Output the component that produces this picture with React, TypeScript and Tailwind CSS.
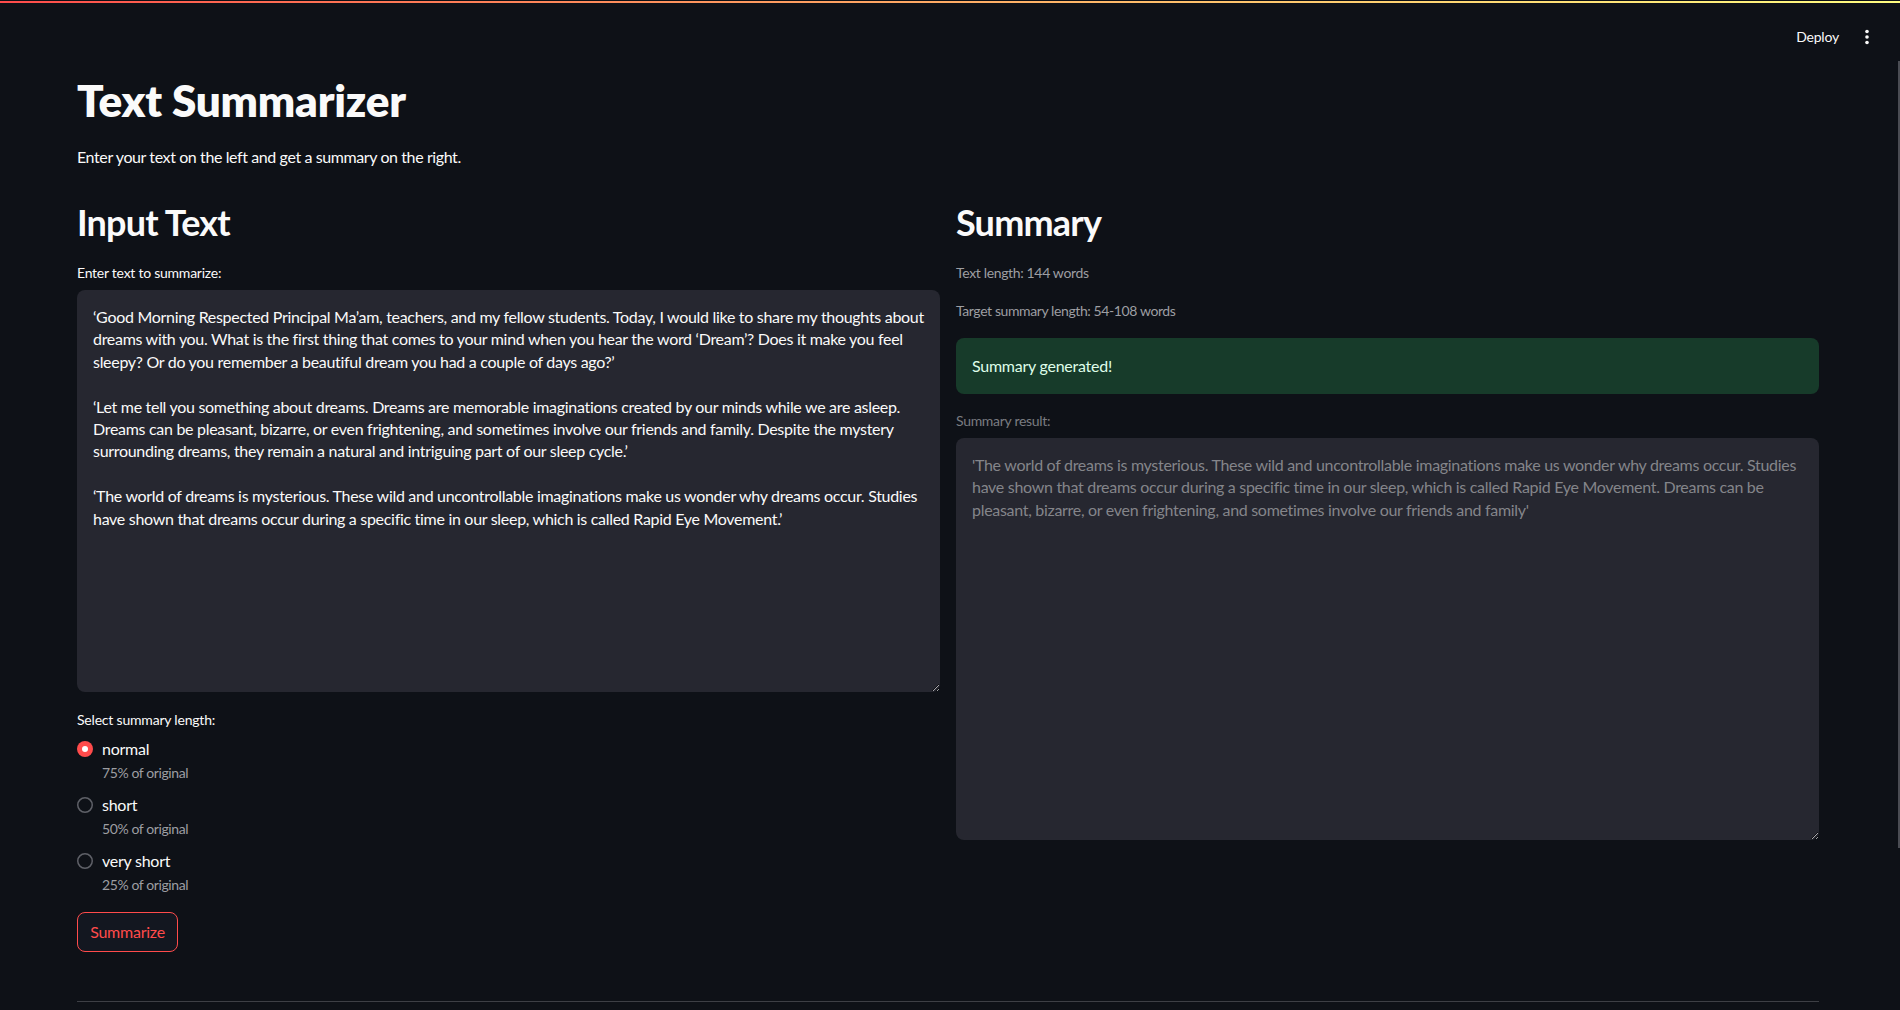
import React from "react";

const inputText = `‘Good Morning Respected Principal Ma’am, teachers, and my fellow students. Today, I would like to share my thoughts about
dreams with you. What is the first thing that comes to your mind when you hear the word ‘Dream’? Does it make you feel
sleepy? Or do you remember a beautiful dream you had a couple of days ago?’

‘Let me tell you something about dreams. Dreams are memorable imaginations created by our minds while we are asleep.
Dreams can be pleasant, bizarre, or even frightening, and sometimes involve our friends and family. Despite the mystery
surrounding dreams, they remain a natural and intriguing part of our sleep cycle.’

‘The world of dreams is mysterious. These wild and uncontrollable imaginations make us wonder why dreams occur. Studies
have shown that dreams occur during a specific time in our sleep, which is called Rapid Eye Movement.’`;

const summaryText = `'The world of dreams is mysterious. These wild and uncontrollable imaginations make us wonder why dreams occur. Studies
have shown that dreams occur during a specific time in our sleep, which is called Rapid Eye Movement. Dreams can be
pleasant, bizarre, or even frightening, and sometimes involve our friends and family'`;

const options = [
  { label: "normal", caption: "75% of original", selected: true },
  { label: "short", caption: "50% of original", selected: false },
  { label: "very short", caption: "25% of original", selected: false },
];

function Radio({ selected }: { selected: boolean }) {
  return (
    <svg width="16" height="16" viewBox="0 0 16 16" className="shrink-0">
      {selected ? (
        <>
          <circle cx="8" cy="8" r="8" fill="#ff4b4b" />
          <circle cx="8" cy="8" r="3" fill="#ffffff" />
        </>
      ) : (
        <circle cx="8" cy="8" r="7.25" fill="none" stroke="#5f6168" strokeWidth="1.5" />
      )}
    </svg>
  );
}

export default function App() {
  return (
    <div className="relative w-full h-[1010px] overflow-hidden bg-[#0e1117] text-[#fafafa] font-['Lato',sans-serif]">
      <div className="absolute left-0 right-0 top-[1px] h-[2px] bg-gradient-to-r from-[#ff4b4b] to-[#fffd80]" />
      <div className="absolute right-0 top-[61px] h-[787px] w-[2px] bg-[#4a4c53]" />

      <header className="flex h-[74px] items-center justify-end gap-[18px] pr-[23px]">
        <span className="text-[14px] leading-[20px] text-[#fafafa] tracking-[-0.2px]">Deploy</span>
        <svg width="20" height="20" viewBox="0 0 20 20">
          <circle cx="10" cy="4.5" r="1.8" fill="#fafafa" />
          <circle cx="10" cy="10" r="1.8" fill="#fafafa" />
          <circle cx="10" cy="15.5" r="1.8" fill="#fafafa" />
        </svg>
      </header>

      <main className="flex flex-col pl-[77px] pr-[81px]">
        <h1 className="text-[44px] leading-[52px] font-extrabold tracking-[-0.2px]">Text Summarizer</h1>
        <p className="mt-[19px] text-[16px] leading-[24px] tracking-[-0.4px]">
          Enter your text on the left and get a summary on the right.
        </p>

        <div className="mt-[31px] grid grid-cols-2 gap-4">
          <section className="flex flex-col">
            <h2 className="text-[36px] leading-[44px] font-bold tracking-[-0.8px]">Input Text</h2>
            <label className="mt-[19px] text-[14px] leading-[20px] tracking-[-0.25px]">Enter text to summarize:</label>
            <textarea
              readOnly
              defaultValue={inputText}
              className="mt-[7px] h-[402px] w-full resize-y rounded-lg bg-[#262730] p-4 text-[16px] leading-[22.4px] tracking-[-0.3px] text-[#fafafa] outline-none [color-scheme:dark] overflow-hidden"
            />
            <div className="mt-[18px] text-[14px] leading-[20px] tracking-[-0.2px]">Select summary length:</div>
            <div className="mt-[7px] flex flex-col gap-[10px]">
              {options.map((o) => (
                <div key={o.label} className="flex items-start gap-[9px]">
                  <div className="flex h-[24px] items-center">
                    <Radio selected={o.selected} />
                  </div>
                  <div className="flex flex-col">
                    <span className="text-[16px] leading-[24px] tracking-[-0.25px]">{o.label}</span>
                    <span className="mt-[2px] text-[14px] leading-[20px] text-[#9d9ea2] tracking-[-0.4px]">{o.caption}</span>
                  </div>
                </div>
              ))}
            </div>
            <button className="mt-[17px] h-[40px] w-[101px] rounded-lg border border-[#ff4b4b] bg-[#131720] text-[16px] text-[#ff4b4b] tracking-[-0.25px]">
              Summarize
            </button>
          </section>

          <section className="flex flex-col">
            <h2 className="text-[36px] leading-[44px] font-bold tracking-[-0.8px]">Summary</h2>
            <div className="mt-[19px] text-[14px] leading-[20px] text-[#9d9ea2] tracking-[-0.35px]">Text length: 144 words</div>
            <div className="mt-[18px] text-[14px] leading-[20px] text-[#9d9ea2] tracking-[-0.4px]">Target summary length: 54-108 words</div>
            <div className="mt-[17px] rounded-lg bg-[#173b2a] px-4 py-4 text-[16px] leading-[24px] text-[#dffde9] tracking-[-0.25px]">
              Summary generated!
            </div>
            <label className="mt-[17px] text-[14px] leading-[20px] text-[#7a7c81] tracking-[-0.3px]">Summary result:</label>
            <textarea
              readOnly
              disabled
              defaultValue={summaryText}
              className="mt-[7px] h-[402px] w-full resize-y rounded-lg bg-[#262730] p-4 text-[16px] leading-[22.4px] tracking-[-0.3px] text-[#84858a] outline-none [color-scheme:dark] overflow-hidden"
            />
          </section>
        </div>

        <div className="mt-[49px] h-px w-full bg-[#3d3f45]" />
      </main>
    </div>
  );
}
